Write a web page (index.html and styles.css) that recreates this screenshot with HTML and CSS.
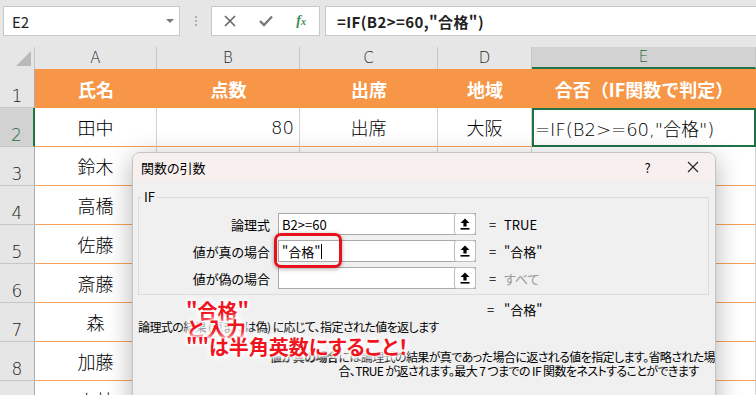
FILE: index.html
```html
<!DOCTYPE html>
<html lang="ja">
<head>
    <meta charset="UTF-8">
    <meta name="viewport" content="width=device-width, initial-scale=1.0">
    <title>関数の引数 - IF</title>
    <link rel="stylesheet" href="styles.css">
</head>
<body>
<div class="screen">
    <div class="toolbar">
        <div class="namebox"><span>E2</span><span class="drop"></span></div>
        <div class="grip"><i></i><i></i><i></i></div>
        <div class="fxbar">
            <span class="fxbtn">
                <svg width="12" height="12" viewBox="0 0 12 12"><path d="M1 1 L11 11 M11 1 L1 11" stroke="#666" stroke-width="1.6" fill="none"/></svg>
            </span>
            <span class="fxbtn">
                <svg width="14" height="12" viewBox="0 0 14 12"><path d="M1 6 L5 10 L13 1.5" stroke="#7a7a7a" stroke-width="2.4" fill="none"/></svg>
            </span>
            <span class="fxbtn fx"><i>f</i><sub>x</sub></span>
        </div>
        <div class="formula">=IF(B2&gt;=60,"合格")</div>
    </div>

    <div class="sheet">
        <div class="corner"><svg width="15" height="15" viewBox="0 0 15 15"><polygon points="15,0 15,15 0,15" fill="#b9b9b9"/></svg></div>
        <div class="ch">A</div>
        <div class="ch">B</div>
        <div class="ch">C</div>
        <div class="ch">D</div>
        <div class="ch sel">E</div>

        <div class="rh">1</div>
        <div class="hd">氏名</div>
        <div class="hd">点数</div>
        <div class="hd">出席</div>
        <div class="hd">地域</div>
        <div class="hd">合否（IF関数で判定）</div>

        <div class="rh sel">2</div>
        <div class="c">田中</div>
        <div class="c num">80</div>
        <div class="c">出席</div>
        <div class="c">大阪</div>
        <div class="c active">=IF(B2&gt;=60,"合格")</div>

        <div class="rh">3</div><div class="c">鈴木</div><div class="c"></div><div class="c"></div><div class="c"></div><div class="c"></div>
        <div class="rh">4</div><div class="c">高橋</div><div class="c"></div><div class="c"></div><div class="c"></div><div class="c"></div>
        <div class="rh">5</div><div class="c">佐藤</div><div class="c"></div><div class="c"></div><div class="c"></div><div class="c"></div>
        <div class="rh">6</div><div class="c">斎藤</div><div class="c"></div><div class="c"></div><div class="c"></div><div class="c"></div>
        <div class="rh">7</div><div class="c">森</div><div class="c"></div><div class="c"></div><div class="c"></div><div class="c"></div>
        <div class="rh">8</div><div class="c">加藤</div><div class="c"></div><div class="c"></div><div class="c"></div><div class="c"></div>
        <div class="rh">9</div><div class="c">小林</div><div class="c"></div><div class="c"></div><div class="c"></div><div class="c"></div>
    </div>

    <div class="dialog">
        <div class="dlg-title">
            <span class="dlg-name">関数の引数</span>
            <span class="dlg-btn">?</span>
            <span class="dlg-btn">
                <svg width="12" height="12" viewBox="0 0 12 12"><path d="M1 1 L11 11 M11 1 L1 11" stroke="#222" stroke-width="1.1" fill="none"/></svg>
            </span>
        </div>

        <fieldset class="group">
            <legend>IF</legend>
            <div class="arg">
                <span class="arg-label">論理式</span>
                <span class="arg-box"><span class="arg-text">B2&gt;=60</span><span class="ref-btn"><svg width="10" height="12" viewBox="0 0 10 12"><path d="M5 0.5 L9.5 5 H6.6 V8.6 H3.4 V5 H0.5 Z" fill="#000"/><rect x="0.5" y="10" width="9" height="1.6" fill="#000"/></svg></span></span>
                <span class="eq">=</span>
                <span class="res">TRUE</span>
            </div>
            <div class="arg">
                <span class="arg-label">値が真の場合</span>
                <span class="arg-box"><span class="arg-text">"合格"<span class="cursor"></span></span><span class="ref-btn"><svg width="10" height="12" viewBox="0 0 10 12"><path d="M5 0.5 L9.5 5 H6.6 V8.6 H3.4 V5 H0.5 Z" fill="#000"/><rect x="0.5" y="10" width="9" height="1.6" fill="#000"/></svg></span></span>
                <span class="eq">=</span>
                <span class="res">"合格"</span>
            </div>
            <div class="arg">
                <span class="arg-label">値が偽の場合</span>
                <span class="arg-box"><span class="arg-text"></span><span class="ref-btn"><svg width="10" height="12" viewBox="0 0 10 12"><path d="M5 0.5 L9.5 5 H6.6 V8.6 H3.4 V5 H0.5 Z" fill="#000"/><rect x="0.5" y="10" width="9" height="1.6" fill="#000"/></svg></span></span>
                <span class="eq">=</span>
                <span class="res muted">すべて</span>
            </div>
        </fieldset>

        <div class="dlg-value"><span class="eq">=</span>"合格"</div>
        <div class="dlg-desc">論理式の結果 (真または偽) に応じて、指定された値を返します</div>
        <div class="dlg-arg">
            <span class="dlg-arg-label">値が真の場合</span>
            <span class="dlg-arg-text">には論理式の結果が真であった場合に返される値を指定します。省略された場<br>合、TRUE が返されます。最大 7 つまでの IF 関数をネストすることができます</span>
        </div>
    </div>

    <div class="mark"></div>
    <div class="note">
        <span>"合格"</span>
        <span>と入力</span>
        <span>""は半角英数にすること！</span>
    </div>
</div>
</body>
</html>
```

FILE: styles.css
```css
body {
    margin: 0;
    background: #fff;
    font-family: "Noto Sans CJK JP", sans-serif;
    color: #000;
}
.screen {
    position: relative;
    width: 756px;
    height: 395px;
    overflow: hidden;
}

/* formula bar */
.toolbar {
    display: flex;
    align-items: flex-start;
    height: 47px;
    box-sizing: border-box;
    padding: 6px 0 0 3px;
    background: #e6e6e6;
}
.namebox {
    width: 177px;
    height: 30px;
    box-sizing: border-box;
    border: 1px solid #c8c8c8;
    background: #fff;
    display: flex;
    align-items: center;
    justify-content: space-between;
    padding: 0 5px 0 8px;
    font-size: 15px;
    color: #222;
}
.drop {
    width: 0;
    height: 0;
    border-left: 4px solid transparent;
    border-right: 4px solid transparent;
    border-top: 4px solid #7a7a7a;
}
.grip {
    width: 31px;
    height: 30px;
    display: flex;
    flex-direction: column;
    align-items: center;
    justify-content: center;
    gap: 2px;
}
.grip i {
    width: 2px;
    height: 2px;
    background: #b0b0b0;
}
.fxbar {
    width: 109px;
    height: 30px;
    box-sizing: border-box;
    border: 1px solid #c8c8c8;
    background: #fff;
    display: flex;
    align-items: center;
}
.fxbtn {
    width: 36px;
    display: flex;
    justify-content: center;
    align-items: center;
}
.fx {
    font-family: "Liberation Serif", serif;
    font-style: italic;
    font-weight: bold;
    color: #3a8a55;
    font-size: 14px;
}
.fx sub {
    font-size: 10px;
    vertical-align: -1px;
}
.formula {
    flex: 1;
    margin: 0 -4px 0 5px;
    height: 30px;
    box-sizing: border-box;
    border: 1px solid #c8c8c8;
    background: #fff;
    display: flex;
    align-items: center;
    padding-left: 11px;
    font-size: 15px;
    font-weight: bold;
    letter-spacing: 0.4px;
    color: #222;
}

/* sheet */
.sheet {
    display: grid;
    grid-template-columns: 35px 122px 143px 138px 94px 224px;
    grid-template-rows: 22px repeat(9, 39px);
    font-family: "DejaVu Sans", "Noto Sans CJK JP", sans-serif;
}
.sheet > div {
    box-sizing: border-box;
    display: flex;
    align-items: center;
    white-space: nowrap;
}
.corner {
    background: #e6e6e6;
    border-right: 1px solid #c6c6c6;
    justify-content: flex-end;
    align-items: flex-end !important;
    padding: 0 3px 3px 0;
}
.ch {
    background: #e6e6e6;
    border-right: 1px solid #c6c6c6;
    justify-content: center;
    font-size: 15px;
    font-weight: 300;
    color: #222;
}
.ch.sel {
    background: #d2d2d2;
    color: #1e6b40;
    border-bottom: 2px solid #217346;
}
.rh {
    background: #e6e6e6;
    border-right: 1px solid #ababab;
    border-bottom: 1px solid #c6c6c6;
    justify-content: center;
    align-items: flex-end !important;
    padding-bottom: 1px;
    font-size: 17px;
    font-weight: 300;
    line-height: 20px;
    color: #222;
}
.rh.sel {
    background: #d2d2d2;
    color: #1e6b40;
    border-right: 2px solid #217346;
}
.hd {
    background: #f79646;
    color: #fff;
    font-family: "Noto Sans CJK JP", sans-serif;
    font-weight: bold;
    font-size: 18px;
    justify-content: center;
}
.c {
    border-right: 1px solid #d4d4d4;
    border-bottom: 1px solid #f4a25c;
    justify-content: center;
    font-size: 18px;
    font-weight: 300;
}
.c.num {
    justify-content: flex-end;
    padding-right: 5px;
}
.c.active {
    border: 2px solid #217346;
    justify-content: flex-start;
    padding-left: 1px;
}

/* dialog */
.dialog {
    position: absolute;
    left: 132px;
    top: 152px;
    width: 584px;
    height: 270px;
    box-sizing: border-box;
    border: 1px solid #c4c4c4;
    border-radius: 8px 8px 0 0;
    background: #f0f0f0;
    box-shadow: 0 6px 26px rgba(0, 0, 0, 0.3);
    font-size: 13px;
    font-feature-settings: "palt";
    overflow: hidden;
}
.dlg-title {
    height: 28px;
    background: #f8f0ef;
    display: flex;
    align-items: center;
    padding-left: 8px;
}
.dlg-name {
    flex: 1;
}
.dlg-btn {
    width: 45px;
    height: 28px;
    display: flex;
    align-items: center;
    justify-content: center;
}
.group {
    margin: 8px 6px 0 5px;
    padding: 8px 0 5px 0;
    border: 1px solid #dcdcdc;
    min-width: 0;
}
.group legend {
    margin-left: 3px;
    padding: 0 2px;
    line-height: 16px;
}
.arg {
    display: flex;
    align-items: center;
    height: 22px;
    margin-bottom: 5px;
}
.arg:last-child {
    margin-bottom: 0;
}
.arg-label {
    width: 131px;
    text-align: right;
    margin-right: 8px;
}
.arg-box {
    width: 198px;
    height: 22px;
    box-sizing: border-box;
    border: 1px solid #a9a9a9;
    background: #fff;
    display: flex;
    align-items: center;
}
.arg-text {
    flex: 1;
    padding-left: 3px;
    display: flex;
    align-items: center;
}
.cursor {
    width: 1px;
    height: 15px;
    background: #000;
    margin-left: 1px;
}
.ref-btn {
    width: 22px;
    height: 22px;
    margin-right: -1px;
    box-sizing: border-box;
    border: 1px solid #bdbdbd;
    border-radius: 3px;
    background: #fff;
    display: flex;
    align-items: center;
    justify-content: center;
}
.eq {
    display: inline-block;
    width: 15px;
}
.arg .eq {
    margin-left: 13px;
}
.muted {
    color: #9a9a9a;
}
.dlg-value {
    margin-top: 7px;
    padding-left: 354px;
    line-height: 16px;
}
.dlg-value .eq {
    width: 17px;
}
.dlg-desc {
    margin-top: 2px;
    padding-left: 5px;
    line-height: 14px;
    font-size: 12px;
    letter-spacing: -0.6px;
    white-space: nowrap;
}
.dlg-arg {
    display: flex;
    margin-top: 16px;
    padding-left: 137px;
    line-height: 14px;
    font-size: 12px;
    letter-spacing: -0.6px;
    white-space: nowrap;
}
.dlg-arg-label {
    width: 75px;
    font-weight: bold;
}

/* annotation */
.mark {
    position: absolute;
    left: 274px;
    top: 233px;
    width: 68px;
    height: 35px;
    box-sizing: border-box;
    border: 3px solid #e8101a;
    border-radius: 7px;
    box-shadow: 0 1px 4px rgba(0, 0, 0, 0.35);
}
.note {
    position: absolute;
    left: 186px;
    top: 302px;
    display: flex;
    flex-direction: column;
    color: #f0141e;
    font-weight: bold;
    font-size: 20px;
    line-height: 18px;
    white-space: nowrap;
    text-shadow: 0 0 2px #fff, 0 0 3px #fff, 0 0 4px #fff, 0 0 6px #fff, 0 0 8px #fff, 0 0 10px #fff, 0 0 12px #fff;
}
.note span:last-child {
    font-feature-settings: "palt";
}
```
